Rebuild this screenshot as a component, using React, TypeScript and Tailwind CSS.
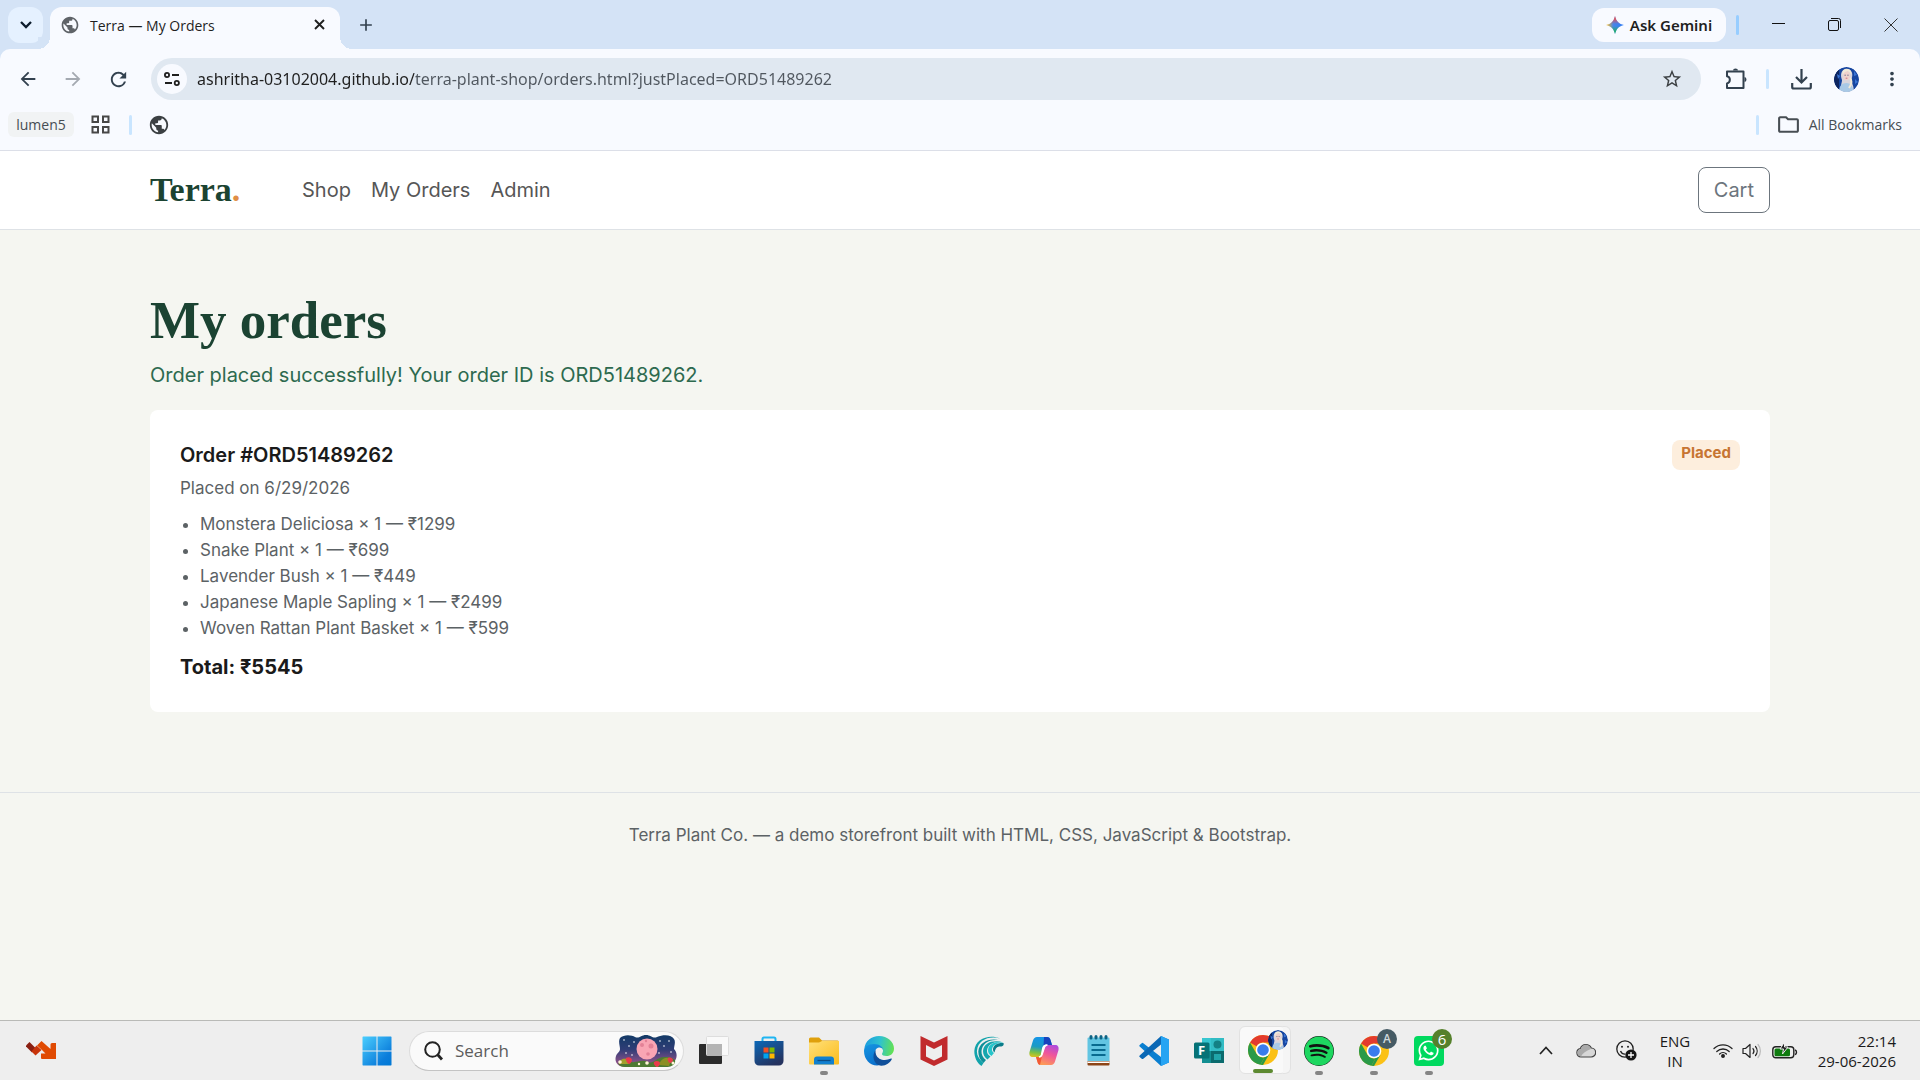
import type { ReactNode } from 'react';
import {
  MdAdd,
  MdArrowBack,
  MdArrowForward,
  MdMoreVert,
  MdOutlineFolder,
  MdPublic,
  MdRefresh,
  MdStarBorder,
} from 'react-icons/md';
import { FaSpotify, FaWhatsapp } from 'react-icons/fa';

const items = [
  { name: 'Monstera Deliciosa', qty: 1, price: 1299 },
  { name: 'Snake Plant', qty: 1, price: 699 },
  { name: 'Lavender Bush', qty: 1, price: 449 },
  { name: 'Japanese Maple Sapling', qty: 1, price: 2499 },
  { name: 'Woven Rattan Plant Basket', qty: 1, price: 599 },
];

function Portrait({ size }: { size: number }) {
  return (
    <svg width={size} height={size} viewBox="0 0 25 25">
      <defs>
        <clipPath id={`face-${size}`}>
          <circle cx="12.5" cy="12.5" r="12.5" />
        </clipPath>
      </defs>
      <g clipPath={`url(#face-${size})`}>
        <rect width="25" height="25" fill="#1746a0" />
        <path d="M0 0h5v25H0z" fill="#0d2560" />
        <path d="M3 7l3 2-2 3zM20 4l3 4-3 1zM21 12l3 3-3 2z" fill="#3a74d4" />
        <path d="M7 25c-1-6 1-9 1-12C6 8 7 2 12.500 2s7 5 5 10c0 5 3 7 2 13z" fill="#d9d5dc" />
        <path d="M5 25c0-6 3-9 7.500-9s6.500 4 7.500 9z" fill="#a9c9e6" />
        <ellipse cx="12.5" cy="8.7" rx="3.4" ry="4.6" fill="#efd2cc" />
        <path d="M8.600 8C8 3 11 1.600 13 1.800c3 0 5 3 4.200 6.200-1-2.500-2.200-3.600-3.700-4.100C11.500 4.300 9.600 5.500 8.600 8z" fill="#f2ead8" />
        <path d="M10.500 8.200h1.300M13.300 8.200h1.300" stroke="#40507c" strokeWidth=".8" />
        <path d="M11.700 11.200h1.700" stroke="#c0566c" strokeWidth=".8" />
        <path d="M16 11c3 3 1 7-1 10" stroke="#f2ead8" strokeWidth="2" fill="none" />
      </g>
    </svg>
  );
}

function GeminiIcon() {
  return (
    <svg width="18" height="18" viewBox="0 0 18 18">
      <defs>
        <linearGradient id="gem-base" x1="0" y1="9" x2="18" y2="9" gradientUnits="userSpaceOnUse">
          <stop offset=".05" stopColor="#f6b92b" />
          <stop offset=".4" stopColor="#4a86e8" />
          <stop offset="1" stopColor="#2f7cf6" />
        </linearGradient>
        <linearGradient id="gem-top" x1="9" y1="0" x2="9" y2="8" gradientUnits="userSpaceOnUse">
          <stop offset=".3" stopColor="#ee4d4d" />
          <stop offset="1" stopColor="#ee4d4d" stopOpacity="0" />
        </linearGradient>
        <linearGradient id="gem-bottom" x1="9" y1="18" x2="9" y2="10" gradientUnits="userSpaceOnUse">
          <stop offset=".3" stopColor="#1fb163" />
          <stop offset="1" stopColor="#1fb163" stopOpacity="0" />
        </linearGradient>
      </defs>
      {['url(#gem-base)', 'url(#gem-top)', 'url(#gem-bottom)'].map((fill) => (
        <path key={fill} d="M9 0c1 5 4 8 9 9-5 1-8 4-9 9-1-5-4-8-9-9 5-1 8-4 9-9z" fill={fill} />
      ))}
    </svg>
  );
}

function TitleBar() {
  return (
    <div className="flex h-[49px] bg-[#d4e3f6] pl-2">
      <button aria-label="Search tabs" className="mt-[7px] flex h-9 w-[35px] items-center justify-center rounded-xl bg-[#e5f1ff]">
        <svg width="12" height="8" viewBox="0 0 12 8" fill="none" stroke="#0c1c2c" strokeWidth="2.300"><path d="M1 1l5 5 5-5" /></svg>
      </button>
      <div className="relative mt-[7px] ml-[7px] flex h-[42px] w-[290px] items-start rounded-t-xl bg-[#f8faff] pt-2 pr-3 pl-[10px] before:absolute before:bottom-0 before:-left-3 before:h-3 before:w-3 before:bg-[radial-gradient(circle_at_0_0,#d4e3f6_12px,#f8faff_12px)] after:absolute after:-right-3 after:bottom-0 after:h-3 after:w-3 after:bg-[radial-gradient(circle_at_100%_0,#d4e3f6_12px,#f8faff_12px)]">
        <MdPublic size={20} className="text-[#5f6368]" />
        <span className="ml-[10px] flex-1 text-[14px] leading-[22px] text-[#1f1f1f]">Terra — My Orders</span>
        <button aria-label="Close tab" className="flex size-[18px] items-center justify-center">
          <svg width="11" height="11" viewBox="0 0 11 11" stroke="#1f1f1f" strokeWidth="1.900"><path d="M1 1l9 9M10 1l-9 9" /></svg>
        </button>
      </div>
      <button aria-label="New tab" className="mt-[15px] ml-4 flex size-5 items-center justify-center text-[#33414f]">
        <MdAdd size={20} />
      </button>
      <button className="mt-2 mr-[10px] ml-auto flex h-[34px] w-[134px] items-center justify-center gap-[6px] rounded-xl bg-[#f8faff] font-['Noto_Sans',sans-serif] text-[15px] font-semibold text-[#1f1f1f]">
        <GeminiIcon />
        Ask Gemini
      </button>
      <div className="mt-[15px] h-5 w-[3px] rounded-full bg-[#97cdff]" />
      <div className="ml-[11px] flex h-[49px]">
        <button aria-label="Minimize" className="flex w-[56px] justify-center pt-[18px]">
          <svg width="13" height="13" viewBox="0 0 13 13"><path d="M0 5.500h13" stroke="#111" /></svg>
        </button>
        <button aria-label="Restore" className="flex w-[56px] justify-center pt-[18px]">
          <svg width="13" height="13" viewBox="0 0 13 13" fill="none" stroke="#111">
            <rect x=".5" y="2.500" width="10" height="10" rx="1.500" />
            <path d="M3 .5h7.500a2 2 0 0 1 2 2V10" />
          </svg>
        </button>
        <button aria-label="Close" className="flex w-[58px] justify-center pt-[18px]">
          <svg width="14" height="14" viewBox="0 0 14 14"><path d="M.5.5l13 13M13.500.5l-13 13" stroke="#333" /></svg>
        </button>
      </div>
    </div>
  );
}

function Toolbar() {
  return (
    <div className="bg-[#d4e3f6]">
      <div className="flex h-[60px] items-center rounded-t-[10px] bg-[#f8faff] pl-[17px]">
        <button aria-label="Back" className="w-[45px] text-[#33414f]"><MdArrowBack size={22} /></button>
        <button aria-label="Forward" className="w-[45px] text-[#a4a9b1]"><MdArrowForward size={22} /></button>
        <button aria-label="Reload" className="w-[44px] text-[#33414f]"><MdRefresh size={23} /></button>
        <div className="flex h-[42px] flex-1 items-center rounded-full bg-[#e0e8f1] pr-[18px] pl-[6px]">
          <button aria-label="Site information" className="flex size-[30px] items-center justify-center rounded-full bg-[#f8faff]">
            <svg width="16" height="14" viewBox="0 0 16 14" fill="none" stroke="#1f1f1f" strokeWidth="1.800">
              <circle cx="3" cy="3" r="2.100" />
              <path d="M8 3h7M1 11h7" />
              <circle cx="12.800" cy="11" r="2.100" />
            </svg>
          </button>
          <input
            aria-label="Address"
            className="ml-[10px] flex-1 bg-[linear-gradient(90deg,#1f1f1f_217px,#50575f_217px)] bg-clip-text font-['Noto_Sans',sans-serif] text-[16px] leading-7 text-transparent outline-none"
            defaultValue="ashritha-03102004.github.io/terra-plant-shop/orders.html?justPlaced=ORD51489262"
          />
          <button aria-label="Bookmark this page" className="text-[#3c4043]"><MdStarBorder size={22} /></button>
        </div>
        <button aria-label="Extensions" className="ml-6">
          <svg width="22" height="22" viewBox="0 0 22 22" fill="none" stroke="#33414f" strokeWidth="2" strokeLinejoin="round">
            <path d="M2 3.500h16.500V20H2v-4.600c3.800-.6 3.800-6.500 0-7.100z" />
            <path d="M8 2.500a2.500 2 0 0 1 5 0zM19.500 9a2 2.500 0 0 1 0 5z" fill="#33414f" stroke="none" />
          </svg>
        </button>
        <div className="ml-[19px] h-5 w-[3px] rounded-full bg-[#c9e5ff]" />
        <button aria-label="Downloads" className="ml-[22px]">
          <svg width="21" height="21" viewBox="0 0 21 21" fill="none" stroke="#33414f" strokeWidth="2.200">
            <path d="M10.500 0v13M5 8l5.500 5.500L16 8M1.200 14v4a1.500 1.500 0 0 0 1.500 1.500h15.600a1.500 1.500 0 0 0 1.500-1.500v-4" />
          </svg>
        </button>
        <button aria-label="Profile" className="ml-[22px] overflow-hidden rounded-full"><Portrait size={25} /></button>
        <button aria-label="Menu" className="mr-[17px] ml-[22px] text-[#33414f]"><MdMoreVert size={22} /></button>
      </div>
    </div>
  );
}

function BookmarksBar() {
  return (
    <div className="flex h-[42px] items-center border-b border-[#dcdfe8] bg-[#f8faff] pr-[18px] pb-[10px] pl-2 text-[14px] text-[#474d53]">
      <a href="#" className="flex h-[25px] w-[66px] items-center justify-center rounded-md bg-[#f1f3f4]">lumen5</a>
      <button aria-label="Tab groups" className="ml-[17px]">
        <svg width="19" height="19" viewBox="0 0 19 19" fill="none" stroke="#474747" strokeWidth="2">
          <path d="M1.500 1.500h5.500v5.500H1.500zM12 1.500h5.500v5.500H12zM1.500 12h5.500v5.500H1.500zM12 12h5.500v5.500H12z" />
        </svg>
      </button>
      <div className="ml-[19px] h-5 w-[3px] rounded-full bg-[#c9e5ff]" />
      <a href="#" aria-label="Site" className="ml-4 text-[#3c4043]"><MdPublic size={22} /></a>
      <div className="ml-auto h-5 w-[3px] rounded-full bg-[#c9e5ff]" />
      <button className="ml-[17px] flex items-center gap-2">
        <MdOutlineFolder size={25} />
        All Bookmarks
      </button>
    </div>
  );
}

function Navbar() {
  return (
    <header className="border-b border-[#dee2e6] bg-white">
      <div className="mx-auto flex h-[78px] max-w-[1650px] items-center px-[15px] text-[20px] leading-[30px]">
        <a href="#" className="w-[152px] font-['Liberation_Serif',serif] text-[34px] font-bold text-[#1b4332]">
          Terra<span className="text-[#e08e45]">.</span>
        </a>
        <nav className="flex gap-5 text-[#565656]">
          <a href="#">Shop</a>
          <a href="#">My Orders</a>
          <a href="#">Admin</a>
        </nav>
        <button className="ml-auto h-[46px] rounded-lg border border-[#6c757d] px-[15px] text-[#6c757d]">Cart</button>
      </div>
    </header>
  );
}

function OrderCard() {
  const total = items.reduce((sum, item) => sum + item.price * item.qty, 0);

  return (
    <article className="flex items-start justify-between rounded-lg bg-white p-[30px]">
      <div>
        <h2 className="text-[20px] leading-[30px] font-semibold text-[#1a1a1a]">Order #ORD51489262</h2>
        <p className="mt-[5px] text-[17px] leading-[26px] text-[#5c6265]">Placed on 6/29/2026</p>
        <ul className="mt-[10px] list-disc pl-5 text-[17px] leading-[26px] text-[#5c6265]">
          {items.map((item) => (
            <li key={item.name}>{`${item.name} × ${item.qty} — ₹${item.price}`}</li>
          ))}
        </ul>
        <p className="mt-[11px] text-[20px] leading-[30px] font-bold text-[#1a1a1a]">Total: ₹{total}</p>
      </div>
      <span className="h-[30px] rounded-lg bg-[#fdeedd] px-[9px] text-[15px] leading-[26px] font-bold text-[#c77532]">Placed</span>
    </article>
  );
}

function StorePage() {
  return (
    <div className="flex-1 overflow-hidden bg-[#f5f6f1] font-['Inter',sans-serif]">
      <Navbar />
      <main className="mx-auto max-w-[1650px] px-[15px] py-[60px]">
        <h1 className="font-['Liberation_Serif',serif] text-[53px] leading-[60px] font-bold text-[#1b4332]">My orders</h1>
        <p className="mt-[10px] mb-5 text-[20px] leading-[30px] text-[#2d6a4f]">
          Order placed successfully! Your order ID is ORD51489262.
        </p>
        <OrderCard />
      </main>
      <footer className="mt-5 border-t border-[#dee2e6] py-[29px] text-center text-[17px] leading-[26px] text-[#5c6265]">
        Terra Plant Co. — a demo storefront built with HTML, CSS, JavaScript &amp; Bootstrap.
      </footer>
    </div>
  );
}

function WidgetIcon() {
  return (
    <svg width="30" height="19" viewBox="0 0 30 19">
      <path d="M3.500 1L10 7.500 6 11.500 0 5.500 0 4.500z" fill="#8a1f12" />
      <path d="M10.500 4.500L15.500 9 9.500 14.500 5.500 10.500z" fill="#c8340a" />
      <path d="M15.500 0l9 8V3.500A1.500 1.500 0 0 1 26 2h4v16H16a1 1 0 0 1-1-1v-4.500h4.500L16 9l-5-4.500z" fill="#e04a02" />
    </svg>
  );
}

function StartIcon() {
  return (
    <svg width="30" height="30" viewBox="0 0 30 30">
      <defs>
        <linearGradient id="start" x1="0" y1="0" x2="30" y2="30" gradientUnits="userSpaceOnUse">
          <stop stopColor="#4cd0ff" />
          <stop offset=".75" stopColor="#0b7ddb" />
          <stop offset="1" stopColor="#0078d4" />
        </linearGradient>
      </defs>
      <path d="M1 .5h13.500v14H.5V1zM15.500.5H29l.5.5v13.500h-14zM.5 15.500h14v14H1l-.5-.5zM15.500 15.500h14V29l-.5.5H15.500z" fill="url(#start)" />
    </svg>
  );
}

function SearchArt() {
  return (
    <svg width="62" height="34" viewBox="0 0 62 34">
      <defs>
        <linearGradient id="night" x1="0" y1="0" x2="0" y2="1">
          <stop stopColor="#123a66" />
          <stop offset=".45" stopColor="#2f3d76" />
          <stop offset="1" stopColor="#a5568f" />
        </linearGradient>
      </defs>
      <path d="M5 4c4-4 12-3 15-1 4 2 6-2 11-2s7 4 11 2c7-3 15-2 17 2 2 3 0 7 0 10 4 4 3 10 0 13s-4 5-10 5H10C3 33-1 28 1 22c1-3 4-4 4-7s-2-8 0-11z" fill="url(#night)" />
      <g fill="#fff">
        {[[9, 6], [14, 12], [19, 8], [11, 19], [45, 7], [49, 12], [54, 7], [56, 18], [44, 19], [17, 21]].map(([x, y]) => (
          <circle key={`${x}-${y}`} cx={x} cy={y} r=".8" />
        ))}
      </g>
      <circle cx="32" cy="15" r="10.500" fill="#f9a5b4" />
      <g fill="#e38197">
        <circle cx="27" cy="11" r="2" />
        <circle cx="36" cy="12" r="2.500" />
        <circle cx="33" cy="20" r="1.800" />
        <circle cx="31" cy="7" r="1.200" />
      </g>
      <path d="M3 29c5-5 9-3 13-1 6 1 10-3 17 0 6 2 8-4 15-5 6 0 8 0 12 3 1 4-3 7-8 7H10c-3 0-6-1-7-4z" fill="#4d7a33" />
      <path d="M44 31c2-7 7-8 13-7l-3 8z" fill="#8b8f25" />
      <path d="M4 30c1-5 4-6 8-5l2 5z" fill="#a3a02c" />
      <path d="M11 24c3-2 6 0 6 2s-2 4-3 4-4-4-3-6zM39 28c2-2 6-1 6 1s-2 4-3 4-4-3-3-5zM53 24c2-1 5 0 5 2s-2 3-3 3-3-3-2-5z" fill="#e93a4b" />
      <g fill="#fff4d6">
        <circle cx="5" cy="28" r="1.800" />
        <circle cx="32" cy="29" r="1.800" />
        <circle cx="24" cy="30" r="1.200" />
        <circle cx="58" cy="29" r="1.500" />
      </g>
    </svg>
  );
}

function TaskViewIcon() {
  return (
    <svg width="30" height="30" viewBox="0 0 30 30">
      <rect y="8" width="23" height="20" rx="1" fill="#2b2b2b" />
      <rect x="7.500" y=".5" width="22" height="19" rx="1" fill="#fafafa" fillOpacity=".92" stroke="#ddd" />
      <path d="M8 8h15v12H8z" fill="#b4b4b4" />
    </svg>
  );
}

function StoreIcon() {
  return (
    <svg width="30" height="30" viewBox="0 0 30 30">
      <defs>
        <linearGradient id="store" x1="0" y1="0" x2=".6" y2="1">
          <stop stopColor="#0b68b8" />
          <stop offset="1" stopColor="#25335f" />
        </linearGradient>
      </defs>
      <path d="M8.500 6V3a1.500 1.500 0 0 1 1.500-1.500h10A1.500 1.500 0 0 1 21.500 3v3" fill="none" stroke="#1fb5f2" strokeWidth="2" />
      <path d="M.5 5h29v20a4.500 4.500 0 0 1-4.500 4.500H5A4.500 4.500 0 0 1 .5 25z" fill="url(#store)" />
      <path d="M9.500 11.500h5v5h-5z" fill="#f25022" />
      <path d="M15.500 11.500h5v5h-5z" fill="#7fba00" />
      <path d="M9.500 17.500h5v5h-5z" fill="#00a4ef" />
      <path d="M15.500 17.500h5v5h-5z" fill="#ffb900" />
    </svg>
  );
}

function FolderIcon() {
  return (
    <svg width="30" height="28" viewBox="0 0 30 28">
      <defs>
        <linearGradient id="folder" x1="0" y1="0" x2="1" y2="1">
          <stop stopColor="#ffe07a" />
          <stop offset="1" stopColor="#fbbc1c" />
        </linearGradient>
      </defs>
      <path d="M0 2a1.500 1.500 0 0 1 1.500-1.500H10l3 3h15.500A1.500 1.500 0 0 1 30 5v8H0z" fill="#dfa00c" />
      <path d="M0 5.500h10l3-1.500h17v22.500a1 1 0 0 1-1 1H1a1 1 0 0 1-1-1z" fill="url(#folder)" />
      <path d="M5 27.500v-5A3 3 0 0 1 8 19.500h14a3 3 0 0 1 3 3v5z" fill="#1180d0" />
      <path d="M8.500 23.500h13" stroke="#0b4d86" strokeWidth="1.300" />
    </svg>
  );
}

function EdgeIcon() {
  return (
    <svg width="30" height="30" viewBox="0 0 30 30">
      <defs>
        <linearGradient id="edge-top" x1="0" y1="8" x2="30" y2="14" gradientUnits="userSpaceOnUse">
          <stop stopColor="#1a9be0" />
          <stop offset=".5" stopColor="#2fc2cf" />
          <stop offset="1" stopColor="#66e34c" />
        </linearGradient>
        <linearGradient id="edge-left" x1="4" y1="8" x2="14" y2="30" gradientUnits="userSpaceOnUse">
          <stop stopColor="#1493e0" />
          <stop offset="1" stopColor="#0a6cc9" />
        </linearGradient>
      </defs>
      <path d="M.3 13C1 5 7.500 0 15 0c8.500 0 15 6 15 12.500 0 5-3.500 7.500-7.500 7.500-3 0-4.500-1-4.500-2 0-.8 1-1.400 1-3.500 0-3-3-5.500-7-5.500C6.500 9 2 11 .3 13z" fill="url(#edge-top)" />
      <path d="M0 15C0 11 4 8 10 8c5.500 0 9 3 9 6-1-2-2.500-2.600-4-2.400-3 .4-4 3-4 5.900 0 5 3.500 9 8 10.500C10 32.500 0 26 0 15z" fill="url(#edge-left)" />
      <path d="M11.500 14c-4 6-2 14.500 5.500 15.800 5 .2 9-3 10.800-6.500.3-.7-.2-1-.8-.7-6 2.900-13 1.400-15-4.100-.4-1.500-.6-3-.5-4.500z" fill="#0f4f9a" />
    </svg>
  );
}

function McAfeeIcon() {
  return (
    <svg width="28" height="30" viewBox="0 0 28 30">
      <path d="M.5 0L14 6.500 27.500 0v23.500L14 30 .5 23.500zM6 9v11.500l8 4 8-4V9l-8 4z" fill="#c12b2d" fillRule="evenodd" />
    </svg>
  );
}

function WaveIcon() {
  return (
    <svg width="30" height="30" viewBox="0 0 30 30">
      <path d="M26 2.500C16-2 1 2 .3 15c0 6 2.500 12 7.200 15l2-3C5 23 2.500 19 3 14.500 4 4 15-.5 26 2.500z" fill="#12a3ab" />
      <path d="M26 4.500C16 1.500 5 6 4.300 15.500c0 4 1.500 8.500 5.200 11.500l2.500-3c-3-2-4.800-5.500-4.500-9C8 7.500 16 2.500 26 4.500z" fill="#0f8f99" />
      <path d="M29.500 6.500c-9-3-20-.5-20.500 8.500 0 3.500 1.500 6.500 4.500 8.500l3-3c-2.500-1.500-3.700-3.500-3.500-6C13.500 8 21 4.500 29.500 6.500z" fill="#16a6ae" />
      <path d="M29.500 7C22 5 14.500 7.500 14 14c0 2.500 1 4.500 3.500 6l2.500-3c-1.500-1-2.200-2-2-3.700C18.500 9 23 6.500 29.500 7z" fill="#25c5cb" />
      <path d="M29.500 7c-5-.5-10.500 1.500-10.500 6.500 0 1.200.5 2.200 1.500 3 .8-3.500 1.500-5.500 4.500-6 1.500 0 2 .2 3-.2 1.500-.6 2-1.800 1.500-3.300z" fill="#0a7c8a" />
    </svg>
  );
}

function CopilotIcon() {
  return (
    <svg width="30" height="28" viewBox="0 0 30 28">
      <defs>
        <linearGradient id="cop-a" x1="8" y1="0" x2="5" y2="21" gradientUnits="userSpaceOnUse">
          <stop stopColor="#1595e8" />
          <stop offset=".45" stopColor="#1b9bc4" />
          <stop offset=".75" stopColor="#7fc142" />
          <stop offset="1" stopColor="#f3c21a" />
        </linearGradient>
        <linearGradient id="cop-b" x1="24" y1="6" x2="16" y2="28" gradientUnits="userSpaceOnUse">
          <stop stopColor="#a548e8" />
          <stop offset=".5" stopColor="#f0569a" />
          <stop offset="1" stopColor="#fd9a56" />
        </linearGradient>
      </defs>
      <path d="M8 0h10c2 0 3 1 3.500 3L23 8h-5c-2 0-3 1-3.500 3l-2 7c-.5 1.500-1.500 2-3 2H4c-3 0-4-2-3.500-5L4 3.500C4.700 1.300 6 0 8 0z" fill="url(#cop-a)" />
      <path d="M15 0h3c2 0 3 1 3.500 3L23 8h-5c-2 0-3 1-3.500 2z" fill="#1843bd" />
      <path d="M22 28H12c-2 0-3-1-3.500-3L7 20h3c2 0 3-1 3.500-3l2-7c.5-1.500 1.500-2 3-2H26c3 0 4 2 3.500 5L26 24.500c-.7 2.200-2 3.500-4 3.500z" fill="url(#cop-b)" />
      <path d="M7 20h3c2 0 3-1 3.500-3L11 28c-1.500-.3-2.200-1.500-2.500-3z" fill="#f25a35" />
      <path d="M14 10.500c.5-1.500 1.500-2.300 3-2.500h1.500c-1.500 0-2.500.7-3 2L13 17.500c-.5 1.700-1.500 2.500-3 2.500 1.500-.4 2.200-1 2.500-2z" fill="#fff" stroke="#fff" strokeWidth="1.500" />
    </svg>
  );
}

function NotepadIcon() {
  return (
    <svg width="23" height="31" viewBox="0 0 23 31">
      <path d="M.5 26h22v3.500a1 1 0 0 1-1 1h-20a1 1 0 0 1-1-1z" fill="#8d4517" />
      <path d="M.5 26.500h22v1.500H.5z" fill="#fff" />
      <path d="M.5 3.500a1 1 0 0 1 1-1h20a1 1 0 0 1 1 1V26H.5z" fill="#62c5e2" />
      <path d="M4.500 10h14M4.500 15h14M4.500 20h14" stroke="#086a8f" strokeWidth="1.800" />
      <path d="M4 1.500v1.500M9 1.500v1.500M14 1.500v1.500M19 1.500v1.500" stroke="#0d6384" strokeWidth="3" strokeLinecap="round" />
    </svg>
  );
}

function VsCodeIcon() {
  return (
    <svg width="30" height="30" viewBox="0 0 30 30">
      <path d="M22 0l8 3.500v23L22 30 .7 10.500a1 1 0 0 1 0-1.500l2-1.800a1.200 1.200 0 0 1 1.600 0L22 21z" fill="#0a7fd0" />
      <path d="M22 0v8.500L4.300 22.700a1.200 1.200 0 0 1-1.600 0l-2-1.800a1 1 0 0 1 0-1.500z" fill="#0b68b5" />
      <path d="M22 0l7 3.200a1.500 1.500 0 0 1 1 1.500v20.600a1.500 1.500 0 0 1-1 1.500L22 30z" fill="#26a4f3" />
    </svg>
  );
}

function FormsIcon() {
  return (
    <svg width="30" height="27" viewBox="0 0 30 27">
      <path d="M8 1h22v25H8z" fill="#138e91" />
      <path d="M8 1h9v13H8z" fill="#37c6d0" />
      <path d="M17 1h13v13H17z" fill="#32bcc4" />
      <path d="M17 14h13v12H17z" fill="#0b6b6e" />
      <circle cx="23.500" cy="7.500" r="4" fill="#138084" />
      <path d="M20 17h7v6h-7z" fill="#21a5a9" />
      <rect y="5.500" width="15.500" height="16" rx="1.500" fill="#067276" />
      <text x="7.500" y="18" textAnchor="middle" fontSize="13" fontWeight="700" fill="#fff">F</text>
    </svg>
  );
}

function ChromeIcon() {
  return (
    <svg width="30" height="30" viewBox="0 0 30 30">
      <circle cx="15" cy="15" r="15" fill="#fbc116" />
      <path d="M15 0a15 15 0 0 1 13 7.500H15a7.500 7.500 0 0 0-6.500 3.800L2 7.500A15 15 0 0 1 15 0z" fill="#e33b2e" />
      <path d="M2 7.500l6.500 11.300A7.500 7.500 0 0 0 15 22.500a7 7 0 0 0 1.500-.2L12.500 29.800A15 15 0 0 1 2 7.500z" fill="#2a9a48" />
      <path d="M21.500 18.800L15 30l-2.500-.2 4-7.500z" fill="#2a9a48" />
      <circle cx="15" cy="15" r="7.300" fill="#fff" />
      <circle cx="15" cy="15" r="5.800" fill="#3a7ced" />
    </svg>
  );
}

function TaskItem({ label, running, badge, children }: { label: string; running?: boolean; badge?: ReactNode; children: ReactNode }) {
  return (
    <button aria-label={label} className="relative flex h-full w-[55px] items-center justify-center">
      {children}
      {badge && <span className="absolute top-0 right-1 z-10">{badge}</span>}
      {running && <span className="absolute bottom-[5px] left-1/2 h-1 w-2 -translate-x-1/2 rounded-full bg-[#858585]" />}
    </button>
  );
}

function Taskbar() {
  return (
    <div className="flex h-[60px] items-center border-t border-[#b9bab7] bg-[#eeeeee]">
      <button aria-label="Widgets" className="flex w-[349px] pl-[26px]"><WidgetIcon /></button>
      <div className="flex h-full items-center">
        <TaskItem label="Start"><StartIcon /></TaskItem>
        <label className="ml-[5px] flex h-10 w-[275px] items-center rounded-full border border-[#dcdcdc] border-b-[#c4c4c4] bg-[#fafafa] pr-[6px] pl-[14px]">
          <svg width="19" height="20" viewBox="0 0 19 20" fill="none" stroke="#222" strokeWidth="2">
            <circle cx="8.500" cy="8.500" r="7.300" />
            <path d="M13.500 13.500l4.500 5" strokeWidth="2.800" />
          </svg>
          <input aria-label="Search" placeholder="Search" className="ml-3 w-0 flex-1 text-[17px] leading-6 outline-none placeholder:text-[#5c5c5c]" />
          <SearchArt />
        </label>
        <div className="ml-[2px] flex h-full">
          <TaskItem label="Task view"><TaskViewIcon /></TaskItem>
          <TaskItem label="Microsoft Store"><StoreIcon /></TaskItem>
          <TaskItem label="File Explorer" running><FolderIcon /></TaskItem>
          <TaskItem label="Edge"><EdgeIcon /></TaskItem>
          <TaskItem label="McAfee"><McAfeeIcon /></TaskItem>
          <TaskItem label="Connect"><WaveIcon /></TaskItem>
          <TaskItem label="Copilot"><CopilotIcon /></TaskItem>
          <TaskItem label="Notepad"><NotepadIcon /></TaskItem>
          <TaskItem label="Visual Studio Code"><VsCodeIcon /></TaskItem>
          <TaskItem label="Forms"><FormsIcon /></TaskItem>
          <button aria-label="Chrome" className="relative mt-[5px] mr-[4px] ml-[3px] flex h-12 w-12 items-center justify-center rounded-md border border-[#e2e2e2] bg-[#f9f9f9]">
            <span className="absolute -top-px -right-[5px] bottom-[-1px] w-2 rounded-r-md border border-l-0 border-[#e2e2e2] bg-[#f5f5f5]" />
            <ChromeIcon />
            <span className="absolute top-[3px] right-[-2px] overflow-hidden rounded-full"><Portrait size={20} /></span>
            <span className="absolute bottom-0 left-1/2 h-1 w-5 -translate-x-1/2 rounded-full bg-[#5d8a31]" />
          </button>
          <TaskItem label="Spotify" running>
            <span className="rounded-full bg-[#111]"><FaSpotify size={30} className="text-[#1ed760]" /></span>
          </TaskItem>
          <TaskItem
            label="Chrome, second profile"
            running
            badge={<span className="mt-2 flex size-5 items-center justify-center rounded-full bg-[#455a64] text-[12px] font-semibold text-[#cfd8dc]">A</span>}
          >
            <ChromeIcon />
          </TaskItem>
          <TaskItem
            label="WhatsApp"
            running
            badge={<span className="mt-2 flex size-5 items-center justify-center rounded-full bg-[#55802b] text-[15px] text-white">6</span>}
          >
            <span className="flex size-[30px] items-center justify-center rounded bg-[#00d95f] text-white"><FaWhatsapp size={23} /></span>
          </TaskItem>
        </div>
      </div>
      <div className="ml-auto flex items-center pr-6 text-[15px] leading-5 text-[#1a1a1a]">
        <button aria-label="Show hidden icons">
          <svg width="14" height="9" viewBox="0 0 14 9" fill="none" stroke="#222" strokeWidth="1.700"><path d="M1 8l6-6.500L13 8" /></svg>
        </button>
        <button aria-label="OneDrive" className="ml-[23px]">
          <svg width="20" height="15" viewBox="0 0 20 15">
            <path d="M5 14a4.300 4.300 0 0 1-.7-8.500A6 6 0 0 1 15.300 5 4.500 4.500 0 0 1 15 14z" fill="#d7d7d7" stroke="#444" strokeWidth="1.200" />
            <path d="M5 13.400c1.500-3 5-6 10-7.500-2-5.500-8.500-5.500-10.300.2C.5 6.500-.2 13 5 13.400z" fill="#aaa" />
          </svg>
        </button>
        <button aria-label="Meet now" className="ml-5">
          <svg width="21" height="21" viewBox="0 0 21 21" fill="none" stroke="#222" strokeWidth="1.300">
            <circle cx="9" cy="9" r="8.200" />
            <circle cx="6" cy="6.800" r="1" fill="#222" stroke="none" />
            <circle cx="12" cy="6.800" r="1" fill="#222" stroke="none" />
            <path d="M4.500 11c1 2.500 3 3.300 5 3.100" />
            <circle cx="15" cy="15" r="5.600" fill="#161616" stroke="none" />
            <path d="M15 12v6M12 15h6" stroke="#fff" />
          </svg>
        </button>
        <button className="ml-5 w-9 text-center">ENG<br />IN</button>
        <button aria-label="Network, volume and battery" className="ml-5 flex items-center gap-[9px]">
          <svg width="20" height="15" viewBox="0 0 20 15" fill="none" stroke="#222" strokeWidth="1.300" strokeLinecap="round">
            <path d="M1 5.500a13 13 0 0 1 18 0M3.800 8.500a9 9 0 0 1 12.400 0M6.600 11a5 5 0 0 1 6.800 0" />
            <circle cx="10" cy="13" r="1.300" fill="#222" />
          </svg>
          <svg width="21" height="16" viewBox="0 0 21 16" fill="none" stroke="#222" strokeWidth="1.200" strokeLinecap="round" strokeLinejoin="round">
            <path d="M1 5.500h2.500L8 1.500v13l-4.500-4H1z" />
            <path d="M11 5.500a4 4 0 0 1 0 5M13.500 3.500a7 7 0 0 1 0 9" />
            <path d="M16 1.500a10 10 0 0 1 0 13" stroke="#bbb" />
          </svg>
          <svg width="26" height="17" viewBox="0 0 26 17">
            <rect x=".8" y="4.800" width="21" height="11" rx="3" fill="none" stroke="#222" strokeWidth="1.400" />
            <rect x="2.500" y="6.500" width="15.500" height="7.800" rx="1.500" fill="#0f7b0f" />
            <path d="M23 8c2 .5 2 4 0 4.600" stroke="#222" strokeWidth="1.400" fill="none" />
            <path d="M12.500 0L8 7h3.500l-1 5L16 5h-3.500z" fill="#222" stroke="#eee" />
          </svg>
        </button>
        <button className="ml-[18px] w-20 text-right whitespace-nowrap">22:14<br />29-06-2026</button>
      </div>
    </div>
  );
}

export default function App() {
  return (
    <div className="flex h-screen flex-col overflow-hidden font-['Open_Sans',sans-serif]">
      <TitleBar />
      <Toolbar />
      <BookmarksBar />
      <StorePage />
      <Taskbar />
    </div>
  );
}
